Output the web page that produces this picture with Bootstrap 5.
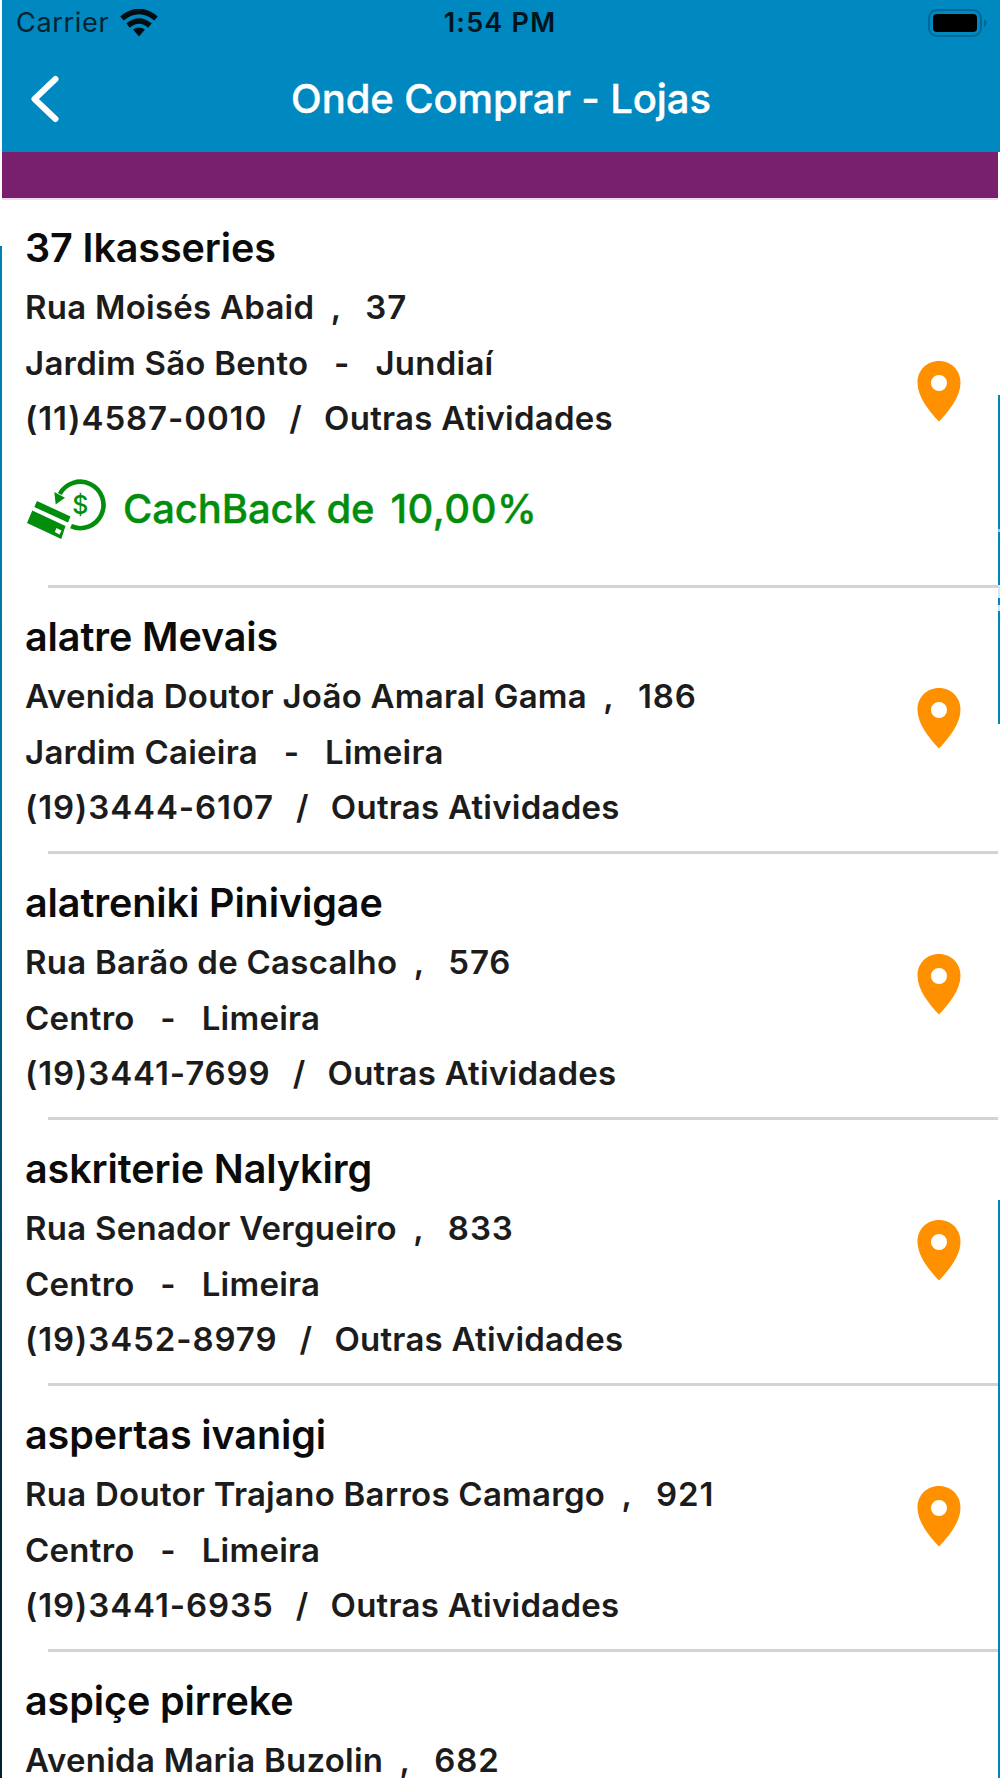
<!DOCTYPE html>
<html lang="pt-BR">
<head>
<meta charset="utf-8">
<meta name="viewport" content="width=device-width, initial-scale=1">
<title>Onde Comprar - Lojas</title>
<link href="https://cdn.jsdelivr.net/npm/bootstrap@5.3.0/dist/css/bootstrap.min.css" rel="stylesheet">
<style>
body{font-family:Inter,"Liberation Sans",sans-serif;background:#fff;color:#111;width:1000px;height:1778px;overflow:hidden}
.edge-l{width:2px;background:linear-gradient(#fff 0 246px,#0080b2 246px,#0076a5 800px,#06283a 1500px,#03202f)}
.edge-r{width:2px;background:linear-gradient(#fff 0 395px,#0086bd 395px 529px,#9fcbe0 529px 532px,#0086bd 532px 585px,#d5e8f2 585px 598px,#0086bd 598px 605px,#d5e8f2 605px 611px,#0086bd 611px 724px,#fff 724px 1200px,#0086bd 1200px)}
.top-area{background:#0088c0;height:152px;margin-right:-2px;position:relative}
.status-row{height:46px;padding:0 12px 0 14px;color:#04222f}
.carrier{font-size:27px;letter-spacing:.7px}
.wifi{margin-left:11px}
.clock{font-size:27px;font-weight:600;letter-spacing:1.2px;color:#00141c;padding-right:4px}
.title-row{height:106px}
.page-title{font-size:40px;font-weight:500;letter-spacing:-.1px;color:#fff;-webkit-text-stroke:.4px #fff}
.purple-bar{height:46px;background:#781f6d}
.hair{height:2px;background:#eedcea}
.store{height:266px;padding:0 37px 0 23px}
.store.tall{height:388px}
.store-name{font-size:39.5px;font-weight:600;letter-spacing:-.1px;line-height:60px;padding-top:19px;color:#0b0b0b;white-space:pre}
.first-store .store-name{padding-top:18px}
.ln{font-size:33px;font-weight:600;line-height:55.6px;letter-spacing:.25px;white-space:pre;color:#1c1c1c}
.ln1{padding-top:2px}
.num{letter-spacing:.9px}
.slash{word-spacing:-1.2px}
.comma{word-spacing:-.4px}
.pin{margin-bottom:7px}
.cash{font-size:40px;font-weight:500;color:#038d0c;letter-spacing:-.1px;white-space:pre;padding-top:30px;-webkit-text-stroke:.4px #038d0c}
.cash-pct{letter-spacing:.5px}
.sep{height:3px;background:#d3d3d3;margin:-3px 0 0 46px}
</style>
</head>
<body>
<div class="d-flex h-100">
<div class="edge-l"></div>
<main class="flex-grow-1 h-100">
<header class="top-area">
<div class="status-row row g-0 align-items-center">
<div class="col d-flex align-items-center"><span class="carrier">Carrier</span>
<svg class="wifi" width="38" height="28" viewBox="0 0 38 28"><g fill="none" stroke="#000d13" stroke-width="5.500"><path d="M2 9.500Q19-4.500 36 9.500"/><path d="M8 16.500Q19 7.500 30 16.500"/></g><path d="M13 20.500Q19 16.500 25 20.500L19 27.500Z" fill="#000d13"/></svg></div>
<div class="col-auto clock">1:54 PM</div>
<div class="col text-end"><svg width="60" height="28" viewBox="0 0 60 28"><rect x="1" y="1" width="52" height="26" rx="8" fill="none" stroke="#006a96" stroke-width="2"/><rect x="5" y="5" width="44" height="18" rx="4"/><path d="M56 10q6 4 0 8z" fill="#006a96"/></svg></div>
</div>
<div class="title-row row g-0 align-items-center">
<div class="col px-4"><svg width="40" height="50" viewBox="0 0 40 50"><path d="M29.500 5L8.500 25L29.500 45" fill="none" stroke="#fff" stroke-width="6" stroke-linecap="round" stroke-linejoin="round"/></svg></div>
<div class="col-auto page-title">Onde Comprar - Lojas</div><div class="col px-4"></div>
</div>
</header>
<div class="purple-bar"></div><div class="hair"></div>
<div id="list"></div>
</main>
<div class="edge-r"></div>
</div>
<script src="https://cdn.jsdelivr.net/npm/bootstrap@5.3.0/dist/js/bootstrap.bundle.min.js"></script>
<script>
const stores=[
["37 Ikasseries","Rua Moisés Abaid","37","Jardim São Bento","Jundiaí","(11)4587-0010","10,00%"],
["alatre Mevais","Avenida Doutor João Amaral Gama","186","Jardim Caieira","Limeira","(19)3444-6107"],
["alatreniki Pinivigae","Rua Barão de Cascalho","576","Centro","Limeira","(19)3441-7699"],
["askriterie Nalykirg","Rua Senador Vergueiro","833","Centro","Limeira","(19)3452-8979"],
["aspertas ivanigi","Rua Doutor Trajano Barros Camargo","921","Centro","Limeira","(19)3441-6935"]];
const pin='<svg class="pin" width="44" height="62" viewBox="0 0 44 62"><path fill="#ff9100" fill-rule="evenodd" d="M22 1C9.500 1 .500 10.500 .500 22.500C.500 37 12 51 22 61.500C32 51 43.500 37 43.500 22.500C43.500 10.500 34.500 1 22 1ZM22 15a8 8 0 1 1 0 16a8 8 0 1 1 0-16Z"/></svg>';
const cashIcon='<svg width="82" height="64" viewBox="0 0 82 64" fill="#038d0c" stroke="none"><path d="M34.800 17A23.200 23.200 0 1 1 46 49.200" fill="none" stroke="#038d0c" stroke-width="4.600"/><path d="M29.300 15L40 20.700L30.700 27.500Z"/><path d="M12 24L45.500 39.500L43 45.500L9.300 30Z"/><path fill-rule="evenodd" d="M7.300 33.500L40.500 49L36.300 62L2 46ZM31.500 51L29.800 55L34.500 57.500L36.500 53.500Z"/><text x="55.300" y="36.500" text-anchor="middle" font-size="25" font-weight="500" letter-spacing="0" stroke="none">$</text></svg>';
const line=s=>`<div class="store-name">${s[0]}</div><div class="ln ln1">${s[1]}<span class="comma">  ,   </span><span class="num">${s[2]}</span></div>`;
document.getElementById('list').innerHTML=stores.map(s=>`
<section class="store d-flex justify-content-between align-items-center ${s[6]?'tall first-store':''}">
<div class="align-self-start">${line(s)}<div class="ln">${s[3]}   -   ${s[4]}</div><div class="ln"><span class="num">${s[5]}</span><span class="slash">   /   </span>Outras Atividades</div>
${s[6]?`<div class="cash d-flex align-items-center">${cashIcon}<span class="ps-3">CachBack de</span><span class="cash-pct ps-3">${s[6]}</span></div>`:''}</div>${pin}</section><div class="sep"></div>`).join('')
+`<section class="store h-auto">${line(["aspiçe pirreke","Avenida Maria Buzolin","682"])}</section>`;
</script>
</body>
</html>
